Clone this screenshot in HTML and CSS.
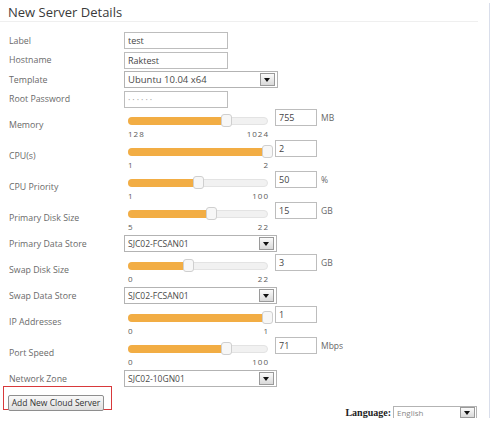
FILE: index.html
```html
<!DOCTYPE html>
<html lang="en">
<head>
    <meta charset="UTF-8">
    <title>New Server Details</title>
    <link rel="stylesheet" href="styles.css">
</head>
<body>

    <div class="page">
        <h2 class="title">New Server Details</h2>

        <div class="form">
            <div class="row text-row">
                <label>Label</label>
                <input type="text" class="field" value="test">
            </div>
            <div class="row text-row">
                <label>Hostname</label>
                <input type="text" class="field" value="Raktest">
            </div>
            <div class="row text-row">
                <label>Template</label>
                <div class="select select-wide"><span class="select-text big">Ubuntu 10.04 x64</span><span class="arrow"></span></div>
            </div>
            <div class="row text-row">
                <label>Root Password</label>
                <input type="text" class="field pass" value="&middot;&middot;&middot;&middot;&middot;&middot;">
            </div>

            <div class="row slider-row">
                <label>Memory</label>
                <div class="control">
                    <div class="slider-line">
                        <div class="slider"><div class="fill" style="width:70.5%"></div><span class="thumb" style="left:70.5%"></span></div>
                        <input type="text" class="num" value="755"><span class="unit">MB</span>
                    </div>
                    <div class="scale"><span>128</span><span>1024</span></div>
                </div>
            </div>
            <div class="row slider-row">
                <label>CPU(s)</label>
                <div class="control">
                    <div class="slider-line">
                        <div class="slider"><div class="fill" style="width:100%"></div><span class="thumb" style="left:100%"></span></div>
                        <input type="text" class="num" value="2">
                    </div>
                    <div class="scale"><span>1</span><span>2</span></div>
                </div>
            </div>
            <div class="row slider-row">
                <label>CPU Priority</label>
                <div class="control">
                    <div class="slider-line">
                        <div class="slider"><div class="fill" style="width:50%"></div><span class="thumb" style="left:50%"></span></div>
                        <input type="text" class="num" value="50"><span class="unit">%</span>
                    </div>
                    <div class="scale"><span>1</span><span>100</span></div>
                </div>
            </div>
            <div class="row slider-row">
                <label>Primary Disk Size</label>
                <div class="control">
                    <div class="slider-line">
                        <div class="slider"><div class="fill" style="width:60%"></div><span class="thumb" style="left:60%"></span></div>
                        <input type="text" class="num" value="15"><span class="unit">GB</span>
                    </div>
                    <div class="scale"><span>5</span><span>22</span></div>
                </div>
            </div>
            <div class="row select-row">
                <label>Primary Data Store</label>
                <div class="select"><span class="select-text">SJC02-FCSAN01</span><span class="arrow"></span></div>
            </div>
            <div class="row slider-row">
                <label>Swap Disk Size</label>
                <div class="control">
                    <div class="slider-line">
                        <div class="slider"><div class="fill" style="width:43%"></div><span class="thumb" style="left:43%"></span></div>
                        <input type="text" class="num" value="3"><span class="unit">GB</span>
                    </div>
                    <div class="scale"><span>0</span><span>22</span></div>
                </div>
            </div>
            <div class="row select-row">
                <label>Swap Data Store</label>
                <div class="select"><span class="select-text">SJC02-FCSAN01</span><span class="arrow"></span></div>
            </div>
            <div class="row slider-row">
                <label>IP Addresses</label>
                <div class="control">
                    <div class="slider-line">
                        <div class="slider"><div class="fill" style="width:100%"></div><span class="thumb" style="left:100%"></span></div>
                        <input type="text" class="num" value="1">
                    </div>
                    <div class="scale"><span>0</span><span>1</span></div>
                </div>
            </div>
            <div class="row slider-row">
                <label>Port Speed</label>
                <div class="control">
                    <div class="slider-line">
                        <div class="slider"><div class="fill" style="width:71%"></div><span class="thumb" style="left:71%"></span></div>
                        <input type="text" class="num" value="71"><span class="unit">Mbps</span>
                    </div>
                    <div class="scale"><span>0</span><span>100</span></div>
                </div>
            </div>
            <div class="row select-row">
                <label>Network Zone</label>
                <div class="select"><span class="select-text">SJC02-10GN01</span><span class="arrow"></span></div>
            </div>
        </div>

        <div class="bottom">
            <div class="btn-box">
                <button class="btn">Add New Cloud Server</button>
            </div>
            <div class="language">
                <span class="lang-label">Language:</span>
                <div class="select select-lang"><span class="select-text">English</span><span class="arrow"></span></div>
            </div>
        </div>
    </div>

</body>
</html>
```

FILE: styles.css
```css
body {
    margin: 0;
    background-color: #ffffff;
    font-family: "Open Sans", Arial, sans-serif;
    color: #5c5c5c;
}

.page {
    width: 490px;
    height: 415px;
    margin-top: 3px;
    border-right: 1px solid #d9deeb;
    box-sizing: border-box;
}

.title {
    width: 470px;
    margin: 0;
    padding-left: 8px;
    height: 18px;
    line-height: 18px;
    font-size: 13px;
    font-weight: normal;
    color: #3a3a3a;
    border-bottom: 1px solid #efefef;
}

.form {
    padding-top: 9px;
}

.row {
    display: flex;
    align-items: center;
}

.row label {
    width: 115px;
    padding-left: 9px;
    font-size: 8.8px;
    color: #6a6a6a;
}

.text-row {
    height: 19.5px;
}

.slider-row {
    height: 31px;
}

.select-row {
    height: 21px;
}

.field,
.num {
    height: 17px;
    box-sizing: border-box;
    border: 1px solid #bdbdbd;
    padding: 0 3px;
    font-family: "Open Sans", Arial, sans-serif;
    font-size: 9px;
    color: #444;
    background: #fff;
    outline: none;
}

.field {
    width: 104px;
}

.pass {
    font-size: 9px;
    letter-spacing: 2px;
    color: #999;
}

/* fake select boxes */
.select {
    display: flex;
    align-items: center;
    justify-content: space-between;
    width: 153px;
    height: 17px;
    box-sizing: border-box;
    border: 1px solid #b3b3b3;
    background: #fff;
}

.select-wide {
    width: 154px;
}

.select-text {
    padding-left: 3px;
    font-size: 8.5px;
    color: #4a4a4a;
}

.select-text.big {
    font-size: 9.5px;
}

.arrow {
    position: relative;
    width: 13px;
    height: 11px;
    margin-right: 2px;
    border: 1px solid #9a9a9a;
    background: linear-gradient(#fbfbfb, #d9d9d9);
}

.arrow::after {
    content: "";
    position: absolute;
    left: 3px;
    top: 4px;
    border-left: 3.5px solid transparent;
    border-right: 3.5px solid transparent;
    border-top: 4px solid #111;
}

/* sliders */
.control {
    align-self: flex-start;
}

.slider-line {
    display: flex;
    align-items: flex-start;
    height: 17px;
}

.slider {
    position: relative;
    width: 140px;
    height: 8px;
    margin: 8px 0 0 4px;
    box-sizing: border-box;
    border: 1px solid #e3e3e3;
    border-radius: 5px;
    background: #f1f1f1;
}

.fill {
    height: 8px;
    margin: -1px 0 0 -1px;
    border-radius: 5px 0 0 5px;
    background: #f2ad44;
}

.thumb {
    position: absolute;
    top: -4px;
    width: 11px;
    height: 13px;
    margin-left: -5.5px;
    box-sizing: border-box;
    border: 1px solid #cfcfcf;
    border-radius: 3px;
    background: #f7f7f7;
}

.num {
    width: 42px;
    margin-left: 7px;
}

.unit {
    margin-left: 4px;
    line-height: 17px;
    font-size: 8.5px;
    color: #666;
}

.scale {
    display: flex;
    justify-content: space-between;
    width: 141px;
    margin: 3px 0 0 4px;
    font-size: 8px;
    line-height: 10px;
    letter-spacing: 1px;
    color: #5a5a5a;
}

/* button + language bar */
.bottom {
    display: flex;
    justify-content: space-between;
    align-items: flex-start;
    margin-top: -3px;
}

.btn-box {
    width: 109px;
    height: 24px;
    margin-left: 3px;
    box-sizing: border-box;
    border: 1px solid #d8393b;
    padding: 2px 0 0 4px;
}

.btn {
    width: 96px;
    height: 16px;
    padding: 0;
    border: 1px solid #8e8e8e;
    border-radius: 2px;
    background: linear-gradient(#fafafa, #dedede);
    font-family: "Open Sans", Arial, sans-serif;
    font-size: 8.5px;
    color: #333;
}

.language {
    display: flex;
    align-items: center;
    margin: 20px 12px 0 0;
}

.lang-label {
    font-family: "Liberation Serif", "Times New Roman", serif;
    font-weight: bold;
    font-size: 10px;
    color: #222;
    margin-right: 2px;
}

.select-lang {
    width: 84px;
    height: 13px;
}

.select-lang .select-text {
    font-size: 8px;
    color: #888;
}

.select-lang .arrow {
    height: 9px;
    margin-right: 1px;
}

.select-lang .arrow::after {
    top: 3px;
}
```
